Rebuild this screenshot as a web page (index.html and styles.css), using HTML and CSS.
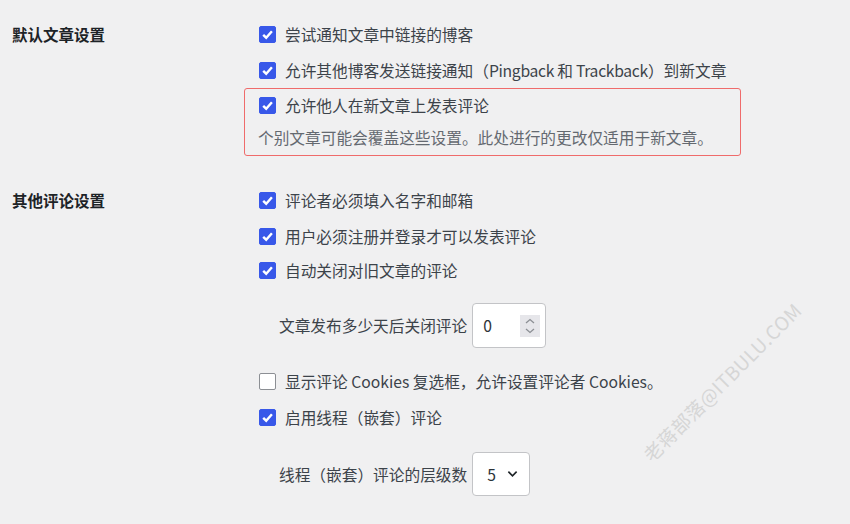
FILE: index.html
```html
<!DOCTYPE html>
<html lang="zh-CN">
<head>
    <meta charset="UTF-8">
    <title>讨论设置</title>
    <link rel="stylesheet" href="styles.css">
</head>
<body>
    <div class="settings">
        <div class="section">
            <div class="section-title">默认文章设置</div>
            <div class="section-body">
                <label class="check-row"><span class="box checked"><svg viewBox="0 0 16 16"><path d="M3.4 8.3 L6.6 11.4 L12.7 4.5"/></svg></span>尝试通知文章中链接的博客</label>
                <label class="check-row"><span class="box checked"><svg viewBox="0 0 16 16"><path d="M3.4 8.3 L6.6 11.4 L12.7 4.5"/></svg></span>允许其他博客发送链接通知（<span class="en">Pingback 和 Trackback</span>）到新文章</label>
                <div class="highlight">
                    <label class="check-row short"><span class="box checked"><svg viewBox="0 0 16 16"><path d="M3.4 8.3 L6.6 11.4 L12.7 4.5"/></svg></span>允许他人在新文章上发表评论</label>
                    <p class="description">个别文章可能会覆盖这些设置。此处进行的更改仅适用于新文章。</p>
                </div>
            </div>
        </div>

        <div class="section second">
            <div class="section-title">其他评论设置</div>
            <div class="section-body">
                <label class="check-row"><span class="box checked"><svg viewBox="0 0 16 16"><path d="M3.4 8.3 L6.6 11.4 L12.7 4.5"/></svg></span>评论者必须填入名字和邮箱</label>
                <label class="check-row"><span class="box checked"><svg viewBox="0 0 16 16"><path d="M3.4 8.3 L6.6 11.4 L12.7 4.5"/></svg></span>用户必须注册并登录才可以发表评论</label>
                <label class="check-row short"><span class="box checked"><svg viewBox="0 0 16 16"><path d="M3.4 8.3 L6.6 11.4 L12.7 4.5"/></svg></span>自动关闭对旧文章的评论</label>

                <div class="field-row days">
                    <span>文章发布多少天后关闭评论</span>
                    <span class="number-input">
                        <span class="value">0</span>
                        <span class="spinner"><svg viewBox="0 0 20 22"><path d="M6 8 L10 4.5 L14 8 M6 14 L10 17.5 L14 14"/></svg></span>
                    </span>
                </div>

                <label class="check-row cookies"><span class="box"></span>显示评论 Cookies 复选框，允许设置评论者 Cookies。</label>
                <label class="check-row"><span class="box checked"><svg viewBox="0 0 16 16"><path d="M3.4 8.3 L6.6 11.4 L12.7 4.5"/></svg></span>启用线程（嵌套）评论</label>

                <div class="field-row depth">
                    <span>线程（嵌套）评论的层级数</span>
                    <span class="select-box">
                        <span class="value">5</span>
                        <svg viewBox="0 0 12 8"><path d="M1.5 1.5 L6 6 L10.5 1.5"/></svg>
                    </span>
                </div>
            </div>
        </div>
    </div>

    <div class="watermark">老蒋部落@ITBULU.COM</div>
</body>
</html>
```

FILE: styles.css
```css
body {
    margin: 0;
    background: #f0f0f1;
    font-family: 'Noto Sans CJK SC', 'Noto Sans', sans-serif;
    font-size: 15.7px;
    color: #3c434a;
    height: 524px;
    overflow: hidden;
    position: relative;
}

.settings {
    padding-top: 16px;
}

.section {
    display: flex;
}

.section.second {
    margin-top: 26px;
}

.section-title {
    width: 246px;
    padding-left: 12px;
    line-height: 36px;
    font-weight: bold;
    font-size: 15.5px;
    color: #1d2327;
}

/* Checkbox rows */
.check-row {
    display: flex;
    align-items: center;
    height: 36px;
    white-space: nowrap;
}

.check-row.short {
    height: 32px;
}

.check-row.cookies {
    margin-top: 15px;
}

.en {
    letter-spacing: -0.3px;
}

.box {
    width: 17px;
    height: 17px;
    margin-left: 1px;
    margin-right: 9px;
    border-radius: 2px;
    background: #fff;
    border: 1px solid #8c8f94;
    box-sizing: border-box;
    display: flex;
    align-items: center;
    justify-content: center;
    flex-shrink: 0;
}

.box.checked {
    background: #3858e9;
    border-color: #3858e9;
}

.box svg {
    width: 15px;
    height: 15px;
}

.box path {
    fill: none;
    stroke: #fff;
    stroke-width: 2.6;
}

/* Red outlined group */
.highlight {
    margin-left: -14px;
    width: 497px;
    box-sizing: border-box;
    border: 1px solid #ef6b6b;
    border-radius: 3px;
    padding: 0 0 6px 13px;
}

.description {
    margin: 6px 0 0;
    line-height: 22px;
    color: #646970;
}

/* Number / select fields */
.field-row {
    display: flex;
    align-items: center;
    padding-left: 21px;
    gap: 5px;
}

.field-row.days {
    margin-top: 17px;
}

.field-row.depth {
    margin-top: 17px;
}

.number-input,
.select-box {
    display: flex;
    align-items: center;
    background: #fff;
    border: 1px solid #c3c4c7;
    border-radius: 4px;
    box-sizing: border-box;
    color: #2c3338;
}

.number-input {
    width: 74px;
    height: 45px;
    padding-left: 10px;
}

.number-input .value {
    flex: 1;
}

.spinner {
    width: 20px;
    height: 22px;
    margin-right: 5px;
    background: #e6e6ea;
    display: flex;
}

.spinner svg {
    width: 20px;
    height: 22px;
}

.spinner path {
    fill: none;
    stroke: #8c8f94;
    stroke-width: 1.3;
}

.select-box {
    width: 58px;
    height: 44px;
    padding-left: 14px;
    gap: 11px;
}

.select-box svg {
    width: 11px;
    height: 8px;
}

.select-box path {
    fill: none;
    stroke: #1d2327;
    stroke-width: 1.8;
}

/* Watermark */
.watermark {
    position: absolute;
    left: 612px;
    top: 369px;
    width: 220px;
    text-align: center;
    font-size: 19px;
    line-height: 26px;
    letter-spacing: 0.5px;
    color: #d6d6d6;
    transform: rotate(-45deg);
    white-space: nowrap;
}
```
